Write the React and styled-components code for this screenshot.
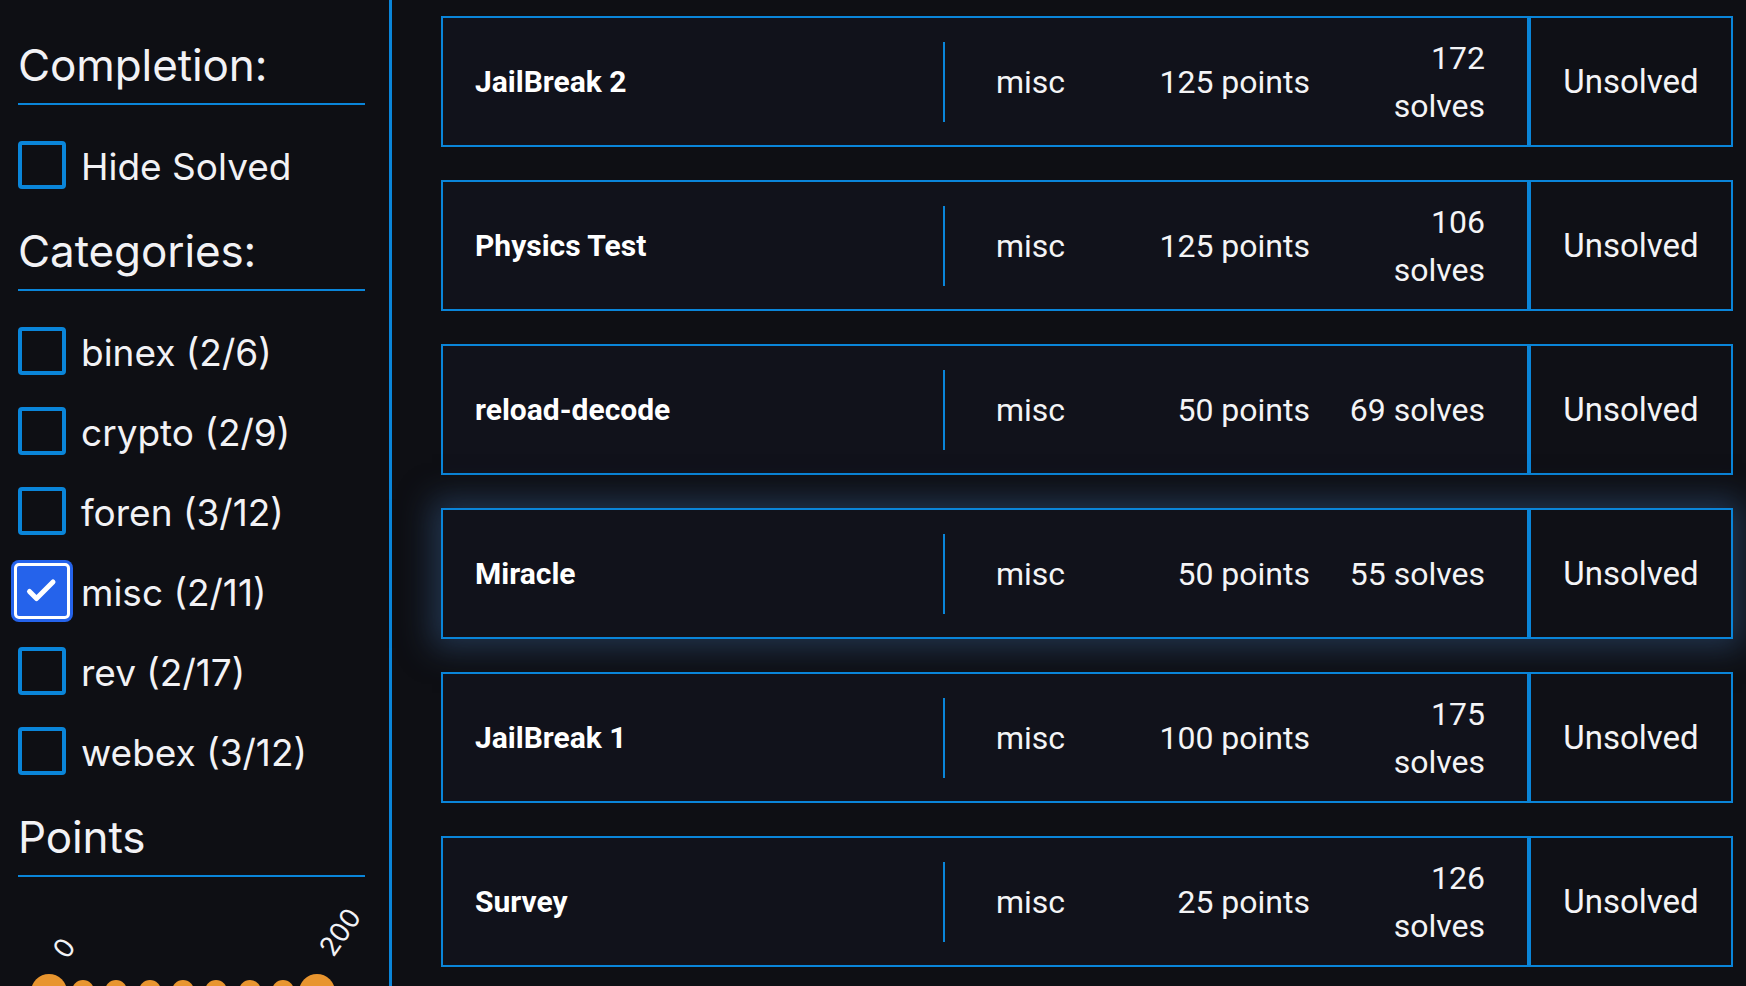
import React from 'react';
import styled, { createGlobalStyle, css } from 'styled-components';

const BLUE = '#0a85d9';
const BG = '#0e0f14';

const GlobalStyle = createGlobalStyle`
  html, body {
    margin: 0;
    padding: 0;
    height: 100%;
    overflow: hidden;
    background: ${BG};
  }
  body {
    font-family: Inter, 'Noto Sans', sans-serif;
    color: #f2f2f5;
  }
`;

const Page = styled.div`
  display: flex;
  height: 100vh;
  background: ${BG};
`;

const Sidebar = styled.aside`
  width: 347px;
  flex-shrink: 0;
  padding: 39px 24px 0 18px;
  border-right: 3px solid ${BLUE};
  display: flex;
  flex-direction: column;
  gap: 36px;
`;

const Heading = styled.h2`
  margin: 0;
  font-size: 44px;
  font-weight: 400;
  line-height: 53px;
  padding-bottom: 11px;
  border-bottom: 2px solid ${BLUE};
  letter-spacing: -0.1px;
`;

const CheckList = styled.div`
  display: flex;
  flex-direction: column;
  gap: 32px;
`;

const CheckRow = styled.label`
  display: flex;
  align-items: center;
  gap: 15px;
  font-size: 37px;
  line-height: 48px;
  height: 48px;
  cursor: pointer;
`;

const LabelText = styled.span`
  padding-top: 4px;
`;

const Box = styled.span`
  box-sizing: border-box;
  width: 48px;
  height: 48px;
  flex-shrink: 0;
  border: 4px solid ${BLUE};
  border-radius: 4px;
  display: flex;
  align-items: center;
  justify-content: center;

  ${(p) =>
    p.$checked &&
    css`
      width: 56px;
      height: 56px;
      margin: 0 -4px;
      border: 3px solid #ffffff;
      border-radius: 5px;
      background: #2563eb;
      box-shadow: 0 0 0 3px #2563eb;
    `}
`;

const SliderArea = styled.div`
  margin-top: -39px;

  svg {
    overflow: visible;
  }
`;

const Main = styled.main`
  flex: 1;
  padding: 16px 13px 0 49px;
  display: flex;
  flex-direction: column;
  gap: 33px;
`;

const Card = styled.div`
  display: flex;
  height: 131px;
  flex-shrink: 0;
  ${(p) =>
    p.$hover &&
    css`
      box-shadow: 0 0 30px 9px rgba(40, 66, 98, 0.75);
    `}
`;

const CardMain = styled.div`
  flex: 1;
  display: flex;
  align-items: center;
  border: 2px solid ${BLUE};
  background: #11121b;
  font-family: Roboto, 'Liberation Sans', sans-serif;
  font-size: 32px;
  line-height: 48px;
  color: #f4f4f6;
`;

const Title = styled.div`
  flex: 1;
  padding-left: 32px;
  font-size: 30px;
  font-weight: 700;
  color: #ffffff;
`;

const Divider = styled.div`
  width: 2px;
  height: 80px;
  background: ${BLUE};
`;

const Stats = styled.div`
  display: flex;
  align-items: center;
  padding: 0 42px 0 51px;
`;

const Cell = styled.div`
  width: ${(p) => p.$w}px;
  text-align: ${(p) => p.$align || 'left'};
  margin-left: ${(p) => p.$gap || 0}px;
`;

const Status = styled.div`
  width: 200px;
  flex-shrink: 0;
  border: 2px solid ${BLUE};
  background: #0f1016;
  display: flex;
  align-items: center;
  justify-content: center;
  font-family: Roboto, 'Liberation Sans', sans-serif;
  font-size: 33px;
  color: #f4f4f6;
`;

const categories = [
  { name: 'binex', solved: 2, total: 6 },
  { name: 'crypto', solved: 2, total: 9 },
  { name: 'foren', solved: 3, total: 12 },
  { name: 'misc', solved: 2, total: 11, checked: true },
  { name: 'rev', solved: 2, total: 17 },
  { name: 'webex', solved: 3, total: 12 },
];

const challenges = [
  { title: 'JailBreak 2', category: 'misc', points: 125, solves: 172 },
  { title: 'Physics Test', category: 'misc', points: 125, solves: 106 },
  { title: 'reload-decode', category: 'misc', points: 50, solves: 69 },
  { title: 'Miracle', category: 'misc', points: 50, solves: 55, hover: true },
  { title: 'JailBreak 1', category: 'misc', points: 100, solves: 175 },
  { title: 'Survey', category: 'misc', points: 25, solves: 126 },
];

const Checkbox = ({ checked, label }) => (
  <CheckRow>
    <Box $checked={checked}>
      {checked && (
        <svg width="50" height="50" viewBox="0 0 50 50">
          <path
            d="M12.5 25.5 L19.5 32.5 L36 16"
            fill="none"
            stroke="#fff"
            strokeWidth="5"
            strokeLinecap="round"
            strokeLinejoin="round"
          />
        </svg>
      )}
    </Box>
    <LabelText>{label}</LabelText>
  </CheckRow>
);

const dots = [65, 98, 132, 165, 198, 232, 265];

const PointsSlider = () => (
  <SliderArea>
    <svg width="347" height="130" viewBox="0 0 347 130">
      <text
        x="46"
        y="74"
        fill="#f2f2f5"
        fontSize="27"
        fontFamily="Inter, sans-serif"
        textAnchor="middle"
        dominantBaseline="central"
        transform="rotate(-55 46 74)"
      >
        0
      </text>
      <text
        x="322"
        y="58"
        fill="#f2f2f5"
        fontSize="27"
        fontFamily="Inter, sans-serif"
        textAnchor="middle"
        dominantBaseline="central"
        transform="rotate(-55 322 58)"
      >
        200
      </text>
      {dots.map((x) => (
        <circle key={x} cx={x} cy="117" r="11" fill="#e8952f" />
      ))}
      <circle cx="31" cy="118" r="18" fill="#e8952f" />
      <circle cx="299" cy="118" r="18" fill="#e8952f" />
    </svg>
  </SliderArea>
);

const App = () => (
  <>
    <GlobalStyle />
    <Page>
      <Sidebar>
        <Heading>Completion:</Heading>
        <Checkbox label="Hide Solved" />
        <Heading>Categories:</Heading>
        <CheckList>
          {categories.map((c) => (
            <Checkbox
              key={c.name}
              checked={c.checked}
              label={`${c.name} (${c.solved}/${c.total})`}
            />
          ))}
        </CheckList>
        <Heading>Points</Heading>
        <PointsSlider />
      </Sidebar>
      <Main>
        {challenges.map((ch) => (
          <Card key={ch.title} $hover={ch.hover}>
            <CardMain>
              <Title>{ch.title}</Title>
              <Divider />
              <Stats>
                <Cell $w={112}>{ch.category}</Cell>
                <Cell $w={202} $align="right">
                  {ch.points} points
                </Cell>
                <Cell $w={146} $align="right" $gap={29}>
                  {ch.solves} solves
                </Cell>
              </Stats>
            </CardMain>
            <Status>Unsolved</Status>
          </Card>
        ))}
      </Main>
    </Page>
  </>
);

export default App;
